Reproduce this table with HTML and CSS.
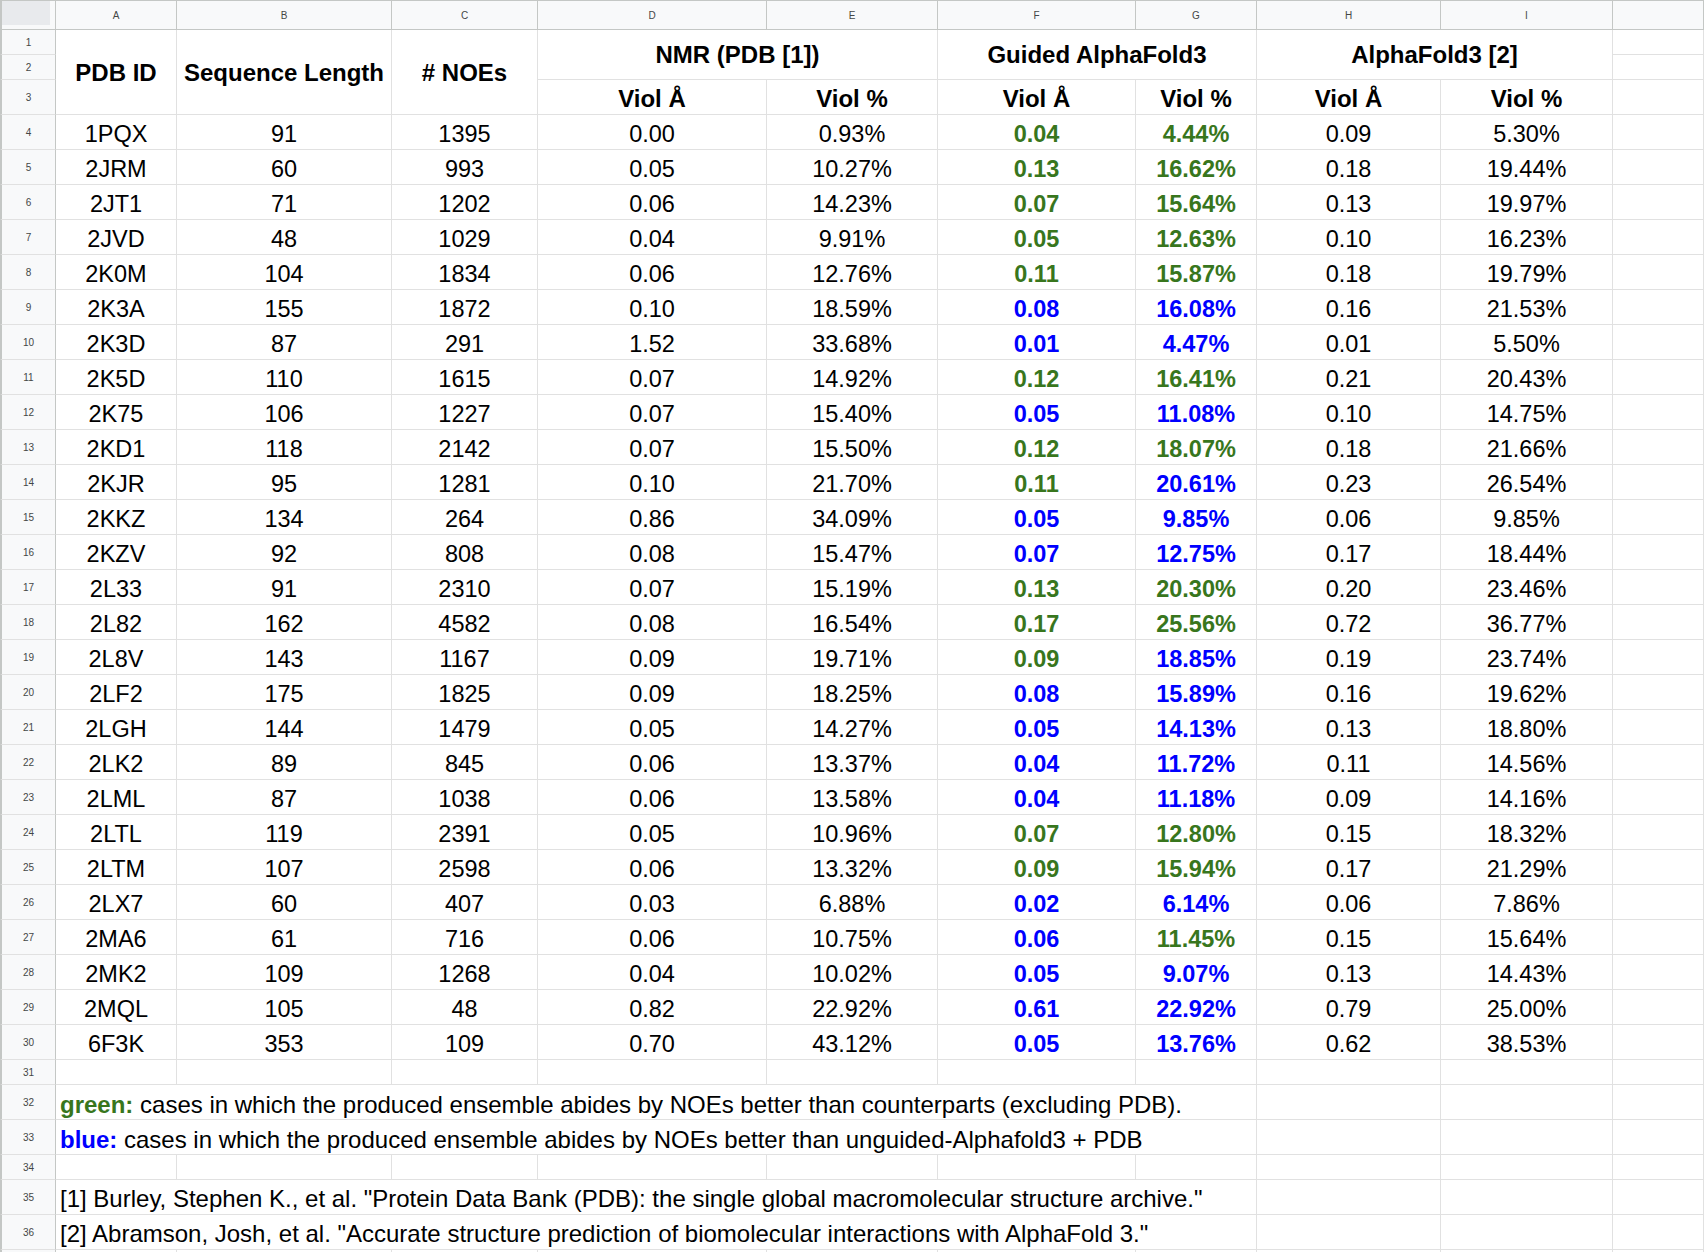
FILE: index.html
```html
<!DOCTYPE html>
<html>
<head>
<meta charset="utf-8">
<link rel="stylesheet" href="styles.css">
</head>
<body>
<div class="sheet">
  <div class="corner"></div>
  <div class="ch">A</div><div class="ch">B</div><div class="ch">C</div><div class="ch">D</div><div class="ch">E</div><div class="ch">F</div><div class="ch">G</div><div class="ch">H</div><div class="ch">I</div><div class="ch"></div>

  <div class="rh">1</div>
  <div class="c h r3">PDB ID</div>
  <div class="c h r3">Sequence Length</div>
  <div class="c h r3"># NOEs</div>
  <div class="c h grp">NMR (PDB [1])</div>
  <div class="c h grp">Guided AlphaFold3</div>
  <div class="c h grp">AlphaFold3 [2]</div>
  <div class="c"></div>
  <div class="rh">2</div><div class="c"></div>
  <div class="rh">3</div>
  <div class="c h sub">Viol Å</div><div class="c h sub">Viol %</div><div class="c h sub">Viol Å</div><div class="c h sub">Viol %</div><div class="c h sub">Viol Å</div><div class="c h sub">Viol %</div><div class="c"></div>

  <div class="rh">4</div><div class="c">1PQX</div><div class="c">91</div><div class="c">1395</div><div class="c">0.00</div><div class="c">0.93%</div><div class="c g">0.04</div><div class="c g">4.44%</div><div class="c">0.09</div><div class="c">5.30%</div><div class="c"></div>
  <div class="rh">5</div><div class="c">2JRM</div><div class="c">60</div><div class="c">993</div><div class="c">0.05</div><div class="c">10.27%</div><div class="c g">0.13</div><div class="c g">16.62%</div><div class="c">0.18</div><div class="c">19.44%</div><div class="c"></div>
  <div class="rh">6</div><div class="c">2JT1</div><div class="c">71</div><div class="c">1202</div><div class="c">0.06</div><div class="c">14.23%</div><div class="c g">0.07</div><div class="c g">15.64%</div><div class="c">0.13</div><div class="c">19.97%</div><div class="c"></div>
  <div class="rh">7</div><div class="c">2JVD</div><div class="c">48</div><div class="c">1029</div><div class="c">0.04</div><div class="c">9.91%</div><div class="c g">0.05</div><div class="c g">12.63%</div><div class="c">0.10</div><div class="c">16.23%</div><div class="c"></div>
  <div class="rh">8</div><div class="c">2K0M</div><div class="c">104</div><div class="c">1834</div><div class="c">0.06</div><div class="c">12.76%</div><div class="c g">0.11</div><div class="c g">15.87%</div><div class="c">0.18</div><div class="c">19.79%</div><div class="c"></div>
  <div class="rh">9</div><div class="c">2K3A</div><div class="c">155</div><div class="c">1872</div><div class="c">0.10</div><div class="c">18.59%</div><div class="c b">0.08</div><div class="c b">16.08%</div><div class="c">0.16</div><div class="c">21.53%</div><div class="c"></div>
  <div class="rh">10</div><div class="c">2K3D</div><div class="c">87</div><div class="c">291</div><div class="c">1.52</div><div class="c">33.68%</div><div class="c b">0.01</div><div class="c b">4.47%</div><div class="c">0.01</div><div class="c">5.50%</div><div class="c"></div>
  <div class="rh">11</div><div class="c">2K5D</div><div class="c">110</div><div class="c">1615</div><div class="c">0.07</div><div class="c">14.92%</div><div class="c g">0.12</div><div class="c g">16.41%</div><div class="c">0.21</div><div class="c">20.43%</div><div class="c"></div>
  <div class="rh">12</div><div class="c">2K75</div><div class="c">106</div><div class="c">1227</div><div class="c">0.07</div><div class="c">15.40%</div><div class="c b">0.05</div><div class="c b">11.08%</div><div class="c">0.10</div><div class="c">14.75%</div><div class="c"></div>
  <div class="rh">13</div><div class="c">2KD1</div><div class="c">118</div><div class="c">2142</div><div class="c">0.07</div><div class="c">15.50%</div><div class="c g">0.12</div><div class="c g">18.07%</div><div class="c">0.18</div><div class="c">21.66%</div><div class="c"></div>
  <div class="rh">14</div><div class="c">2KJR</div><div class="c">95</div><div class="c">1281</div><div class="c">0.10</div><div class="c">21.70%</div><div class="c g">0.11</div><div class="c b">20.61%</div><div class="c">0.23</div><div class="c">26.54%</div><div class="c"></div>
  <div class="rh">15</div><div class="c">2KKZ</div><div class="c">134</div><div class="c">264</div><div class="c">0.86</div><div class="c">34.09%</div><div class="c b">0.05</div><div class="c b">9.85%</div><div class="c">0.06</div><div class="c">9.85%</div><div class="c"></div>
  <div class="rh">16</div><div class="c">2KZV</div><div class="c">92</div><div class="c">808</div><div class="c">0.08</div><div class="c">15.47%</div><div class="c b">0.07</div><div class="c b">12.75%</div><div class="c">0.17</div><div class="c">18.44%</div><div class="c"></div>
  <div class="rh">17</div><div class="c">2L33</div><div class="c">91</div><div class="c">2310</div><div class="c">0.07</div><div class="c">15.19%</div><div class="c g">0.13</div><div class="c g">20.30%</div><div class="c">0.20</div><div class="c">23.46%</div><div class="c"></div>
  <div class="rh">18</div><div class="c">2L82</div><div class="c">162</div><div class="c">4582</div><div class="c">0.08</div><div class="c">16.54%</div><div class="c g">0.17</div><div class="c g">25.56%</div><div class="c">0.72</div><div class="c">36.77%</div><div class="c"></div>
  <div class="rh">19</div><div class="c">2L8V</div><div class="c">143</div><div class="c">1167</div><div class="c">0.09</div><div class="c">19.71%</div><div class="c g">0.09</div><div class="c b">18.85%</div><div class="c">0.19</div><div class="c">23.74%</div><div class="c"></div>
  <div class="rh">20</div><div class="c">2LF2</div><div class="c">175</div><div class="c">1825</div><div class="c">0.09</div><div class="c">18.25%</div><div class="c b">0.08</div><div class="c b">15.89%</div><div class="c">0.16</div><div class="c">19.62%</div><div class="c"></div>
  <div class="rh">21</div><div class="c">2LGH</div><div class="c">144</div><div class="c">1479</div><div class="c">0.05</div><div class="c">14.27%</div><div class="c b">0.05</div><div class="c b">14.13%</div><div class="c">0.13</div><div class="c">18.80%</div><div class="c"></div>
  <div class="rh">22</div><div class="c">2LK2</div><div class="c">89</div><div class="c">845</div><div class="c">0.06</div><div class="c">13.37%</div><div class="c b">0.04</div><div class="c b">11.72%</div><div class="c">0.11</div><div class="c">14.56%</div><div class="c"></div>
  <div class="rh">23</div><div class="c">2LML</div><div class="c">87</div><div class="c">1038</div><div class="c">0.06</div><div class="c">13.58%</div><div class="c b">0.04</div><div class="c b">11.18%</div><div class="c">0.09</div><div class="c">14.16%</div><div class="c"></div>
  <div class="rh">24</div><div class="c">2LTL</div><div class="c">119</div><div class="c">2391</div><div class="c">0.05</div><div class="c">10.96%</div><div class="c g">0.07</div><div class="c g">12.80%</div><div class="c">0.15</div><div class="c">18.32%</div><div class="c"></div>
  <div class="rh">25</div><div class="c">2LTM</div><div class="c">107</div><div class="c">2598</div><div class="c">0.06</div><div class="c">13.32%</div><div class="c g">0.09</div><div class="c g">15.94%</div><div class="c">0.17</div><div class="c">21.29%</div><div class="c"></div>
  <div class="rh">26</div><div class="c">2LX7</div><div class="c">60</div><div class="c">407</div><div class="c">0.03</div><div class="c">6.88%</div><div class="c b">0.02</div><div class="c b">6.14%</div><div class="c">0.06</div><div class="c">7.86%</div><div class="c"></div>
  <div class="rh">27</div><div class="c">2MA6</div><div class="c">61</div><div class="c">716</div><div class="c">0.06</div><div class="c">10.75%</div><div class="c b">0.06</div><div class="c g">11.45%</div><div class="c">0.15</div><div class="c">15.64%</div><div class="c"></div>
  <div class="rh">28</div><div class="c">2MK2</div><div class="c">109</div><div class="c">1268</div><div class="c">0.04</div><div class="c">10.02%</div><div class="c b">0.05</div><div class="c b">9.07%</div><div class="c">0.13</div><div class="c">14.43%</div><div class="c"></div>
  <div class="rh">29</div><div class="c">2MQL</div><div class="c">105</div><div class="c">48</div><div class="c">0.82</div><div class="c">22.92%</div><div class="c b">0.61</div><div class="c b">22.92%</div><div class="c">0.79</div><div class="c">25.00%</div><div class="c"></div>
  <div class="rh">30</div><div class="c">6F3K</div><div class="c">353</div><div class="c">109</div><div class="c">0.70</div><div class="c">43.12%</div><div class="c b">0.05</div><div class="c b">13.76%</div><div class="c">0.62</div><div class="c">38.53%</div><div class="c"></div>

  <div class="rh">31</div><div class="c"></div><div class="c"></div><div class="c"></div><div class="c"></div><div class="c"></div><div class="c"></div><div class="c"></div><div class="c"></div><div class="c"></div><div class="c"></div>
  <div class="rh">32</div><div class="c note"><span class="g">green:</span>&nbsp;cases in which the produced ensemble abides by NOEs better than counterparts (excluding PDB).</div><div class="c"></div><div class="c"></div><div class="c"></div>
  <div class="rh">33</div><div class="c note"><span class="b">blue:</span>&nbsp;cases in which the produced ensemble abides by NOEs better than unguided-Alphafold3 + PDB</div><div class="c"></div><div class="c"></div><div class="c"></div>
  <div class="rh">34</div><div class="c"></div><div class="c"></div><div class="c"></div><div class="c"></div><div class="c"></div><div class="c"></div><div class="c"></div><div class="c"></div><div class="c"></div><div class="c"></div>
  <div class="rh">35</div><div class="c note ref">[1] Burley, Stephen K., et al. "Protein Data Bank (PDB): the single global macromolecular structure archive."</div><div class="c"></div><div class="c"></div><div class="c"></div>
  <div class="rh">36</div><div class="c note ref">[2] Abramson, Josh, et al. "Accurate structure prediction of biomolecular interactions with AlphaFold 3."</div><div class="c"></div><div class="c"></div><div class="c"></div>
  <div class="rh"></div><div class="c"></div><div class="c"></div><div class="c"></div><div class="c"></div><div class="c"></div><div class="c"></div><div class="c"></div><div class="c"></div><div class="c"></div><div class="c"></div>
</div>
</body>
</html>
```

FILE: styles.css
```css
html, body {
  margin: 0;
  padding: 0;
  background: #ffffff;
  overflow: hidden;
}

.sheet {
  display: grid;
  grid-template-columns: 56px 121px 215px 146px 229px 171px 198px 121px 184px 172px 1fr;
  grid-template-rows: 30px 25px 25px 35px repeat(27, 35px) 25px 35px 35px 25px 35px 35px 35px;
  width: 1704px;
  font-family: "Liberation Sans", Arial, sans-serif;
  color: #000000;
}

.corner {
  box-sizing: border-box;
  background: #f8f9fa;
  border-top: 1px solid #c4c7c5;
  border-left: 2px solid #c4c7c5;
  border-right: 1px solid #c4c7c5;
  border-bottom: 1px solid #c4c7c5;
  position: relative;
}

.corner::before {
  content: "";
  position: absolute;
  left: 0;
  top: 0;
  width: 48px;
  height: 24px;
  background: #e8eaed;
}

.ch {
  box-sizing: border-box;
  background: #f8f9fa;
  border-top: 1px solid #c4c7c5;
  border-right: 1px solid #c4c7c5;
  border-bottom: 1px solid #c4c7c5;
  display: flex;
  align-items: center;
  justify-content: center;
  font-size: 10px;
  color: #444746;
  padding-top: 1px;
}

.rh {
  box-sizing: border-box;
  background: #f8f9fa;
  border-left: 2px solid #c4c7c5;
  border-right: 1px solid #c4c7c5;
  border-bottom: 1px solid #e1e1e1;
  display: flex;
  align-items: center;
  justify-content: center;
  font-size: 10px;
  color: #444746;
}

.c {
  box-sizing: border-box;
  border-right: 1px solid #e1e1e1;
  border-bottom: 1px solid #e1e1e1;
  display: flex;
  align-items: center;
  justify-content: center;
  font-size: 23.5px;
  line-height: 1;
  padding: 5px 3px 0 3px;
  white-space: nowrap;
}

.h {
  font-weight: bold;
  font-size: 24px;
}

.sub {
  padding-top: 3px;
}

.r3 {
  grid-row: span 3;
  padding-top: 2px;
}

.grp {
  grid-column: span 2;
  grid-row: span 2;
  padding-top: 1px;
}

.g {
  color: #38761d;
  font-weight: bold;
}

.b {
  color: #0000ff;
  font-weight: bold;
}

.note {
  grid-column: span 7;
  justify-content: flex-start;
  padding-left: 4px;
  font-size: 24px;
}

.ref {
  padding-top: 3px;
}
```
